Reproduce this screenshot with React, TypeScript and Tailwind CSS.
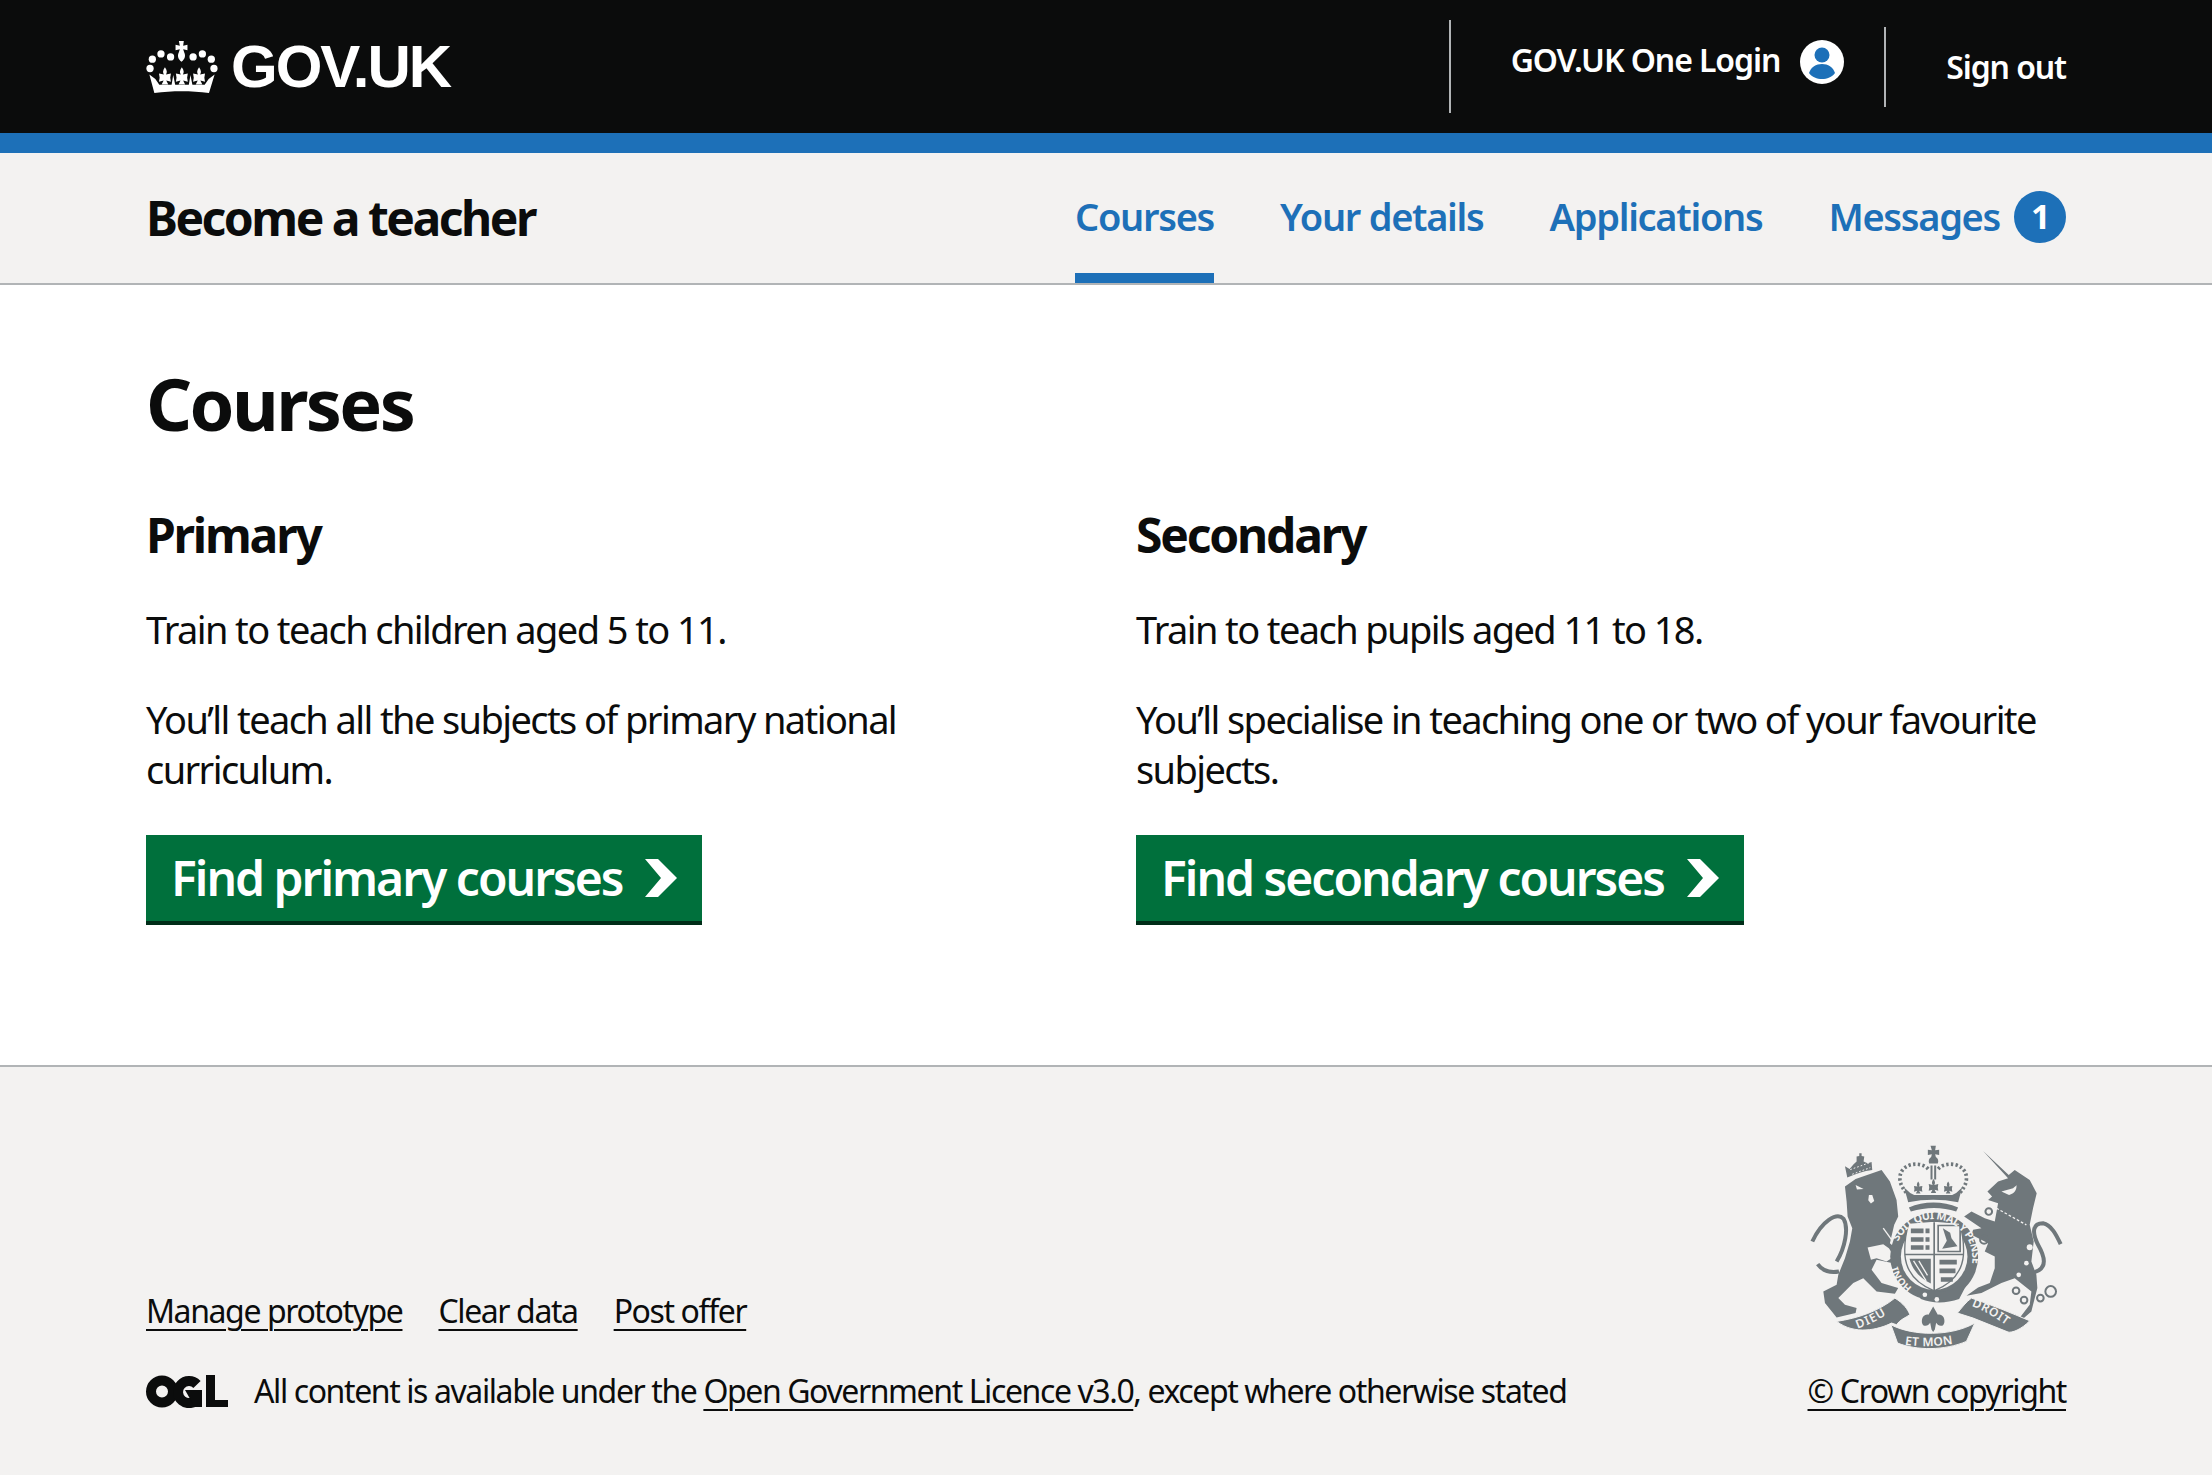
const navItems = ['Courses', 'Your details', 'Applications', 'Messages'];

const fleur = 'M0-32C7-22 7-16 3-10L18-13 16 0 18 12 4 8 10 20H-10L-4 8-18 12-16 0-18-13-3-10C-7-16-7-22 0-32Z';

const Crown = () => (
  <svg viewBox="78 115 217 157" className="h-[52px] w-[72px] shrink-0 fill-white">
    <circle cx="97" cy="170" r="11" />
    <circle cx="123" cy="154" r="11" />
    <circle cx="152" cy="163" r="11" />
    <circle cx="220" cy="163" r="11" />
    <circle cx="248" cy="154" r="11" />
    <circle cx="275" cy="170" r="11" />
    <circle cx="90" cy="198" r="11" />
    <circle cx="283" cy="198" r="11" />
    <path d="M177 115h15l-2 14 13-3v17l-13-3 3 9c5 10 3 20-8 29-11-9-13-19-8-29l3-9-13 3v-17l13 3z" />
    <path transform="translate(135 226)" d={fleur} />
    <path transform="translate(186 226)" d={fleur} />
    <path transform="translate(238 226)" d={fleur} />
    <path d="M88 216l18 14 12 17h137l12-17 18-14-17 56c-55-7-110-7-165 0z" />
    <path d="M155 248l5-30 6 30zM207 248l5-30 6 30z" />
  </svg>
);

const Person = () => (
  <svg viewBox="0 0 44 44" className="h-[44px] w-[44px] shrink-0">
    <circle cx="22" cy="22" r="22" fill="#fff" />
    <circle cx="22" cy="15" r="7.5" fill="#1d70b8" />
    <path d="M9 33c2-6 7-9 13-9s11 3 13 9c-3 4-8 6-13 6s-10-2-13-6z" fill="#1d70b8" />
  </svg>
);

const Chevron = () => (
  <svg viewBox="0 0 32 38" className="h-[38px] w-[32px] shrink-0 fill-white">
    <path d="M0 0h13l19 19-19 19H0l16-19z" />
  </svg>
);

const Ogl = () => (
  <svg viewBox="0 0 82 33" className="h-[33px] w-[82px] shrink-0">
    <circle cx="16" cy="16.5" r="11" fill="none" stroke="#0b0c0c" strokeWidth="10" />
    <path d="M51 9.5a11 11 0 1 0 1 14" fill="none" stroke="#0b0c0c" strokeWidth="10" />
    <path d="M39 15h17v17h-8l-1-3z" fill="#0b0c0c" />
    <path d="M60 0h9v25h13v7H60z" fill="#0b0c0c" />
  </svg>
);

const Crest = () => (
  <svg viewBox="85 45 760 620" className="h-[207px] w-[253px] shrink-0" fill="#6f777b">
    {/* lion */}
    <path d="M190 175L222 152 300 125 325 160 345 215 350 265 338 290 325 345 360 375 335 405 285 395 270 425 300 465 350 480 340 497 285 490 245 450 215 465 170 510 190 530 225 540 222 555 165 568 130 525 125 490 165 470 170 440 190 390 205 340 212 300 198 265 195 220Z" />
    <path d="M258 358L305 348 322 360 338 385 315 400 285 390 268 395Z" fill="#f3f2f1" />
    <path d="M222 170l24 12-20 2zM262 200l10 0 6 18-10 8-8-10z" fill="#f3f2f1" />
    <path d="M305 300l52 72" stroke="#f3f2f1" strokeWidth="4" />
    <path d="M172 430C138 436 118 422 108 408M165 400C190 360 202 300 186 272 165 250 120 280 92 340" fill="none" stroke="#6f777b" strokeWidth="12" />
    <path d="M197 148l-7-34 14 8 12-14 9-8 0-15 8-2 0-8 7 0 0 8 8 2-2 15 12 5 12-4 2 24c-25 3-50 12-75 23z" />
    <path d="M206 124l56-20M212 138l54-20" stroke="#f3f2f1" strokeWidth="3" strokeDasharray="5 6" />
    {/* unicorn */}
    <path d="M605 68L682 140 700 125 745 155 766 195 755 240 745 290 757 340 750 400 765 440 768 480 755 530 750 550 725 572 718 565 745 530 750 490 700 450 660 465 600 495 555 503 590 478 625 465 640 420 640 385 610 370 620 345 570 320 575 305 600 300 548 265 570 250 610 270 640 280 650 225 620 215 632 205 618 190 650 160 680 150Z" />
    <path d="M645 240l90 50" stroke="#f3f2f1" strokeWidth="4" strokeDasharray="8 6" />
    <path d="M660 190l35-10c5-6 8-5 10-10 2 14-6 26-22 30z" fill="#f3f2f1" />
    <circle cx="745" cy="357" r="9" fill="#f3f2f1" />
    <circle cx="735" cy="405" r="7" fill="#f3f2f1" />
    <circle cx="712" cy="440" r="7" fill="#f3f2f1" />
    <path d="M760 432C800 420 790 385 770 350 750 310 755 285 785 285 810 290 825 320 838 348" fill="none" stroke="#6f777b" strokeWidth="12" />
    <g fill="none" stroke="#6f777b" strokeWidth="6">
      <circle cx="704" cy="488" r="10" />
      <circle cx="728" cy="516" r="10" />
      <circle cx="777" cy="510" r="10" />
      <circle cx="808" cy="490" r="16" />
      <circle cx="622" cy="250" r="10" />
      <circle cx="608" cy="335" r="12" />
    </g>
    {/* royal crown */}
    <path d="M447 52h16l-2 14 12-2v16l-12-2 2 8c7 4 9 12 6 20h-26c-3-8-1-16 6-20l2-8-12 2V64l12 2z" />
    <path d="M447 112h6v42h-6zM458 112h6v42h-6z" />
    <path d="M440 122c-22-25-85-18-85 28 0 18 10 32 24 50M470 122c22-25 85-18 85 28 0 18-10 32-24 50" fill="none" stroke="#6f777b" strokeWidth="11" strokeDasharray="7 7" />
    <path transform="translate(410 182) scale(.7)" d={fleur} />
    <path transform="translate(500 182) scale(.7)" d={fleur} />
    <path transform="translate(456 178) scale(.8)" d={fleur} />
    <path d="M368 178l18 16 12 6h114l12-6 18-16-12 44c-50-10-100-10-150 0z" />
    <path d="M382 238c45-20 102-20 148 0l-6 12c-42-14-90-14-136 0z" />
    {/* shield and garter */}
    <circle cx="458" cy="385" r="132" />
    <circle cx="458" cy="385" r="100" fill="#f3f2f1" />
    <path d="M370 380c-2-40 4-70 12-95l76-6 76 6c8 25 14 55 12 95-4 50-30 85-88 108-58-23-84-58-88-108z" fill="#f3f2f1" stroke="#6f777b" strokeWidth="4" />
    <path d="M458 282v205M370 379h176" stroke="#6f777b" strokeWidth="5" />
    <path d="M388 308h56M388 334h56M388 358h56" stroke="#6f777b" strokeWidth="14" strokeDasharray="38 6" />
    <path d="M474 402h52M474 428h48M478 454h36" stroke="#6f777b" strokeWidth="14" />
    <path d="M470 292h66v78h-66z" fill="none" stroke="#6f777b" strokeWidth="5" />
    <path d="M484 300l22 14 4 16 18 24-46 8 14-24z" />
    <path d="M384 392h64v74c-30-14-56-40-64-74z" />
    <path d="M396 398l38 60M412 398l26 44" stroke="#f3f2f1" strokeWidth="4" />
    <defs>
      <path id="garter" d="M350 340A117 117 0 1 1 543 468" />
      <path id="garterLow" d="M392 478A113 113 0 0 1 345 393" />
      <path id="dieu" d="M228 602C262 590 300 572 332 548" />
      <path id="mon" d="M370 650C420 658 490 656 545 640" />
      <path id="droit" d="M570 533C610 548 650 573 692 604" />
    </defs>
    <text fill="#f3f2f1" fontSize="32" fontWeight="700" fontFamily="'Noto Sans', sans-serif">
      <textPath href="#garter">SOIT QUI MAL Y PENSE</textPath>
    </text>
    <text fill="#f3f2f1" fontSize="30" fontWeight="700" fontFamily="'Noto Sans', sans-serif">
      <textPath href="#garterLow">HONI</textPath>
    </text>
    <path d="M388 470c45 30 110 30 170-5l-25 48c-40 14-80 14-115 0z" />
    <circle cx="430" cy="500" r="7" fill="#f3f2f1" />
    <circle cx="466" cy="514" r="7" fill="#f3f2f1" />
    {/* motto ribbon */}
    <g stroke="#f3f2f1" strokeWidth="3">
      <path d="M165 580C230 570 290 550 340 510 365 525 380 545 385 560 370 570 355 575 345 590L330 585C290 605 220 622 165 580Z" />
      <path d="M528 555C540 540 555 520 570 510 630 530 690 555 745 578 720 605 690 615 680 612L575 570Z" />
      <path d="M328 590C395 625 510 625 580 585L555 640C490 668 405 668 348 645Z" />
    </g>
    <text fill="#f3f2f1" fontSize="36" fontWeight="600" letterSpacing="3" fontFamily="'Noto Sans', sans-serif">
      <textPath href="#dieu">DIEU</textPath>
    </text>
    <text fill="#f3f2f1" fontSize="36" fontWeight="600" letterSpacing="1" fontFamily="'Noto Sans', sans-serif">
      <textPath href="#mon">ET MON</textPath>
    </text>
    <text fill="#f3f2f1" fontSize="36" fontWeight="600" letterSpacing="2" fontFamily="'Noto Sans', sans-serif">
      <textPath href="#droit">DROIT</textPath>
    </text>
    {/* fleur de lis */}
    <path d="M455 535l14 25c20-5 25 25 15 32-10 4-15-2-20-8l-4 20-5 8-5-8-4-20c-5 6-10 12-20 8-10-7-5-37 15-32z" />
  </svg>
);

const Column = ({ title, lines, cta }: { title: string; lines: string[]; cta: string }) => (
  <div>
    <h2 className="mb-[39px] text-[48px] leading-[60px] font-bold tracking-[-2.2px]">{title}</h2>
    {lines.map((line) => (
      <p key={line} className="mb-10 text-[38px] leading-[50px] tracking-[-1.6px]">
        {line}
      </p>
    ))}
    <a className="mt-[1px] inline-flex h-[90px] items-center gap-[23px] border-b-4 border-[#002d18] bg-[#00703c] px-[25px] text-[48px] font-semibold tracking-[-2px] text-white">
      {cta}
      <Chevron />
    </a>
  </div>
);

export default function App() {
  return (
    <div className="min-h-[1475px] bg-white font-['Noto_Sans',sans-serif] text-[#0b0c0c]">
      <header className="border-b-[20px] border-[#1d70b8] bg-[#0b0c0c] text-white">
        <div className="mx-auto flex h-[133px] w-[1920px] items-start justify-between">
          <a className="mt-[38px] flex items-center gap-[13px]">
            <Crown />
            <span className="font-['Liberation_Sans',sans-serif] text-[60px] leading-[58px] font-bold tracking-[-2px]">GOV.UK</span>
          </a>
          <div className="flex items-start">
            <div className="mt-5 flex h-[93px] items-start border-l-2 border-[#b1b4b6] pl-[60px]">
              <span className="mt-5 flex items-center gap-5">
                <span className="pb-[4px] text-[32px] leading-10 font-semibold tracking-[-1.1px]">GOV.UK One Login</span>
                <Person />
              </span>
            </div>
            <div className="mt-[27px] ml-10 flex h-[80px] items-center border-l-2 border-[#b1b4b6] pl-[60px]">
              <span className="text-[32px] leading-10 font-semibold tracking-[-1.1px]">Sign out</span>
            </div>
          </div>
        </div>
      </header>

      <nav className="border-b-2 border-[#b1b4b6] bg-[#f3f2f1]">
        <div className="mx-auto flex h-[130px] w-[1920px] items-stretch justify-between">
          <span className="mt-[35px] text-[48px] leading-[60px] font-bold tracking-[-2.5px]">Become a teacher</span>
          <ul className="flex gap-[66px] text-[38px] font-semibold tracking-[-1.3px] text-[#1d70b8]">
            {navItems.map((item, i) => (
              <li key={item} className={i === 0 ? 'flex items-center border-b-[10px] border-[#1d70b8] pt-[7px]' : 'flex items-center pb-[3px]'}>
                {item}
                {item === 'Messages' && (
                  <span className="ml-[14px] flex h-[52px] w-[52px] items-center justify-center rounded-full bg-[#1d70b8] text-[34px] font-bold text-white">
                    1
                  </span>
                )}
              </li>
            ))}
          </ul>
        </div>
      </nav>

      <main className="mx-auto w-[1920px] pt-[78px] pb-[140px]">
        <h1 className="mb-[62px] text-[72px] leading-[80px] font-bold tracking-[-2.6px]">Courses</h1>
        <div className="grid grid-cols-[930px_930px] gap-[60px]">
          <Column
            title="Primary"
            lines={['Train to teach children aged 5 to 11.', 'You’ll teach all the subjects of primary national curriculum.']}
            cta="Find primary courses"
          />
          <Column
            title="Secondary"
            lines={['Train to teach pupils aged 11 to 18.', 'You’ll specialise in teaching one or two of your favourite subjects.']}
            cta="Find secondary courses"
          />
        </div>
      </main>

      <footer className="border-t-2 border-[#b1b4b6] bg-[#f3f2f1]">
        <div className="mx-auto flex w-[1920px] items-end justify-between pt-[76px] pb-[61px] text-[32px] leading-[50px] tracking-[-1.4px]">
          <div>
            <ul className="mb-[30px] flex gap-9">
              <li className="underline decoration-2 underline-offset-[6px]">Manage prototype</li>
              <li className="underline decoration-2 underline-offset-[6px]">Clear data</li>
              <li className="underline decoration-2 underline-offset-[6px]">Post offer</li>
            </ul>
            <div className="flex items-center gap-[26px]">
              <Ogl />
              <span>
                All content is available under the{' '}
                <a className="underline decoration-2 underline-offset-[6px]">Open Government Licence v3.0</a>, except where otherwise stated
              </span>
            </div>
          </div>
          <div className="flex flex-col items-center">
            <Crest />
            <a className="mt-4 underline decoration-2 underline-offset-[6px]">© Crown copyright</a>
          </div>
        </div>
      </footer>
    </div>
  );
}
